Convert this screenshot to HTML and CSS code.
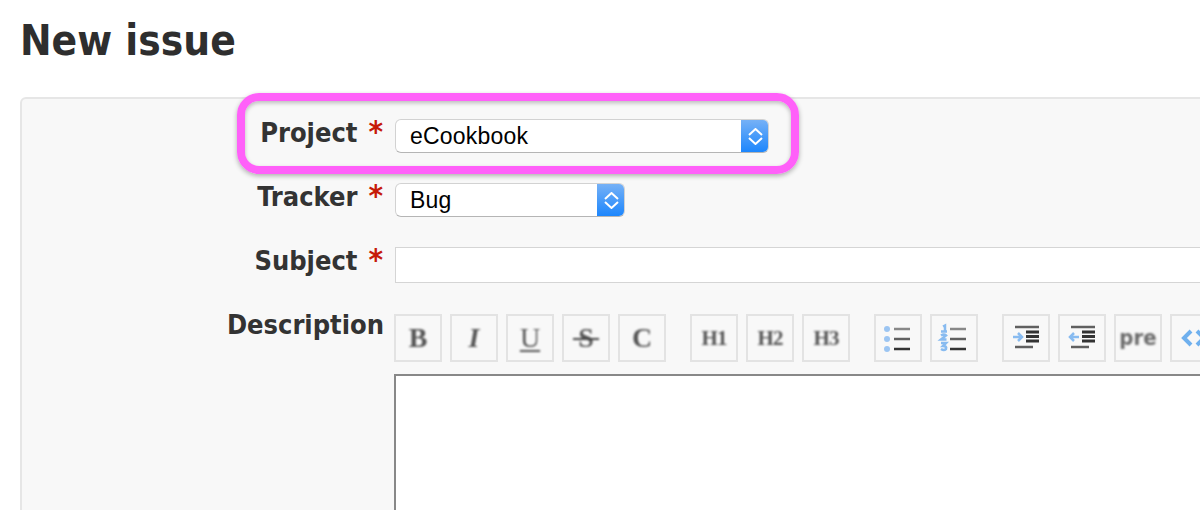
FILE: index.html
```html
<!DOCTYPE html>
<html lang="en">
  <head>
    <meta charset="UTF-8" />
    <title>New issue</title>
    <link rel="stylesheet" href="styles.css">
  </head>
  <body>
    <h2 class="page-title">New issue</h2>

    <form class="issue-form">
      <!-- Project -->
      <label class="field-label">Project<span class="required">*</span></label>
      <div class="select select-project">
        <span class="select-text">eCookbook</span>
        <span class="select-arrow">
          <svg width="15" height="17" viewBox="0 0 15 17"><path d="M1 7L7.500 1 14 7M1 10l6.500 6 6.500-6" /></svg>
        </span>
      </div>

      <!-- Tracker -->
      <label class="field-label">Tracker<span class="required">*</span></label>
      <div class="select select-tracker">
        <span class="select-text">Bug</span>
        <span class="select-arrow">
          <svg width="15" height="17" viewBox="0 0 15 17"><path d="M1 7L7.500 1 14 7M1 10l6.500 6 6.500-6" /></svg>
        </span>
      </div>

      <!-- Subject -->
      <label class="field-label">Subject<span class="required">*</span></label>
      <input class="subject" type="text" />

      <!-- Description -->
      <label class="field-label">Description</label>
      <div class="editor">
        <div class="toolbar">
          <div class="tool-group">
            <button class="tool" type="button"><span class="glyph">B</span></button>
            <button class="tool" type="button"><span class="glyph glyph-i">I</span></button>
            <button class="tool" type="button"><span class="glyph glyph-u">U</span></button>
            <button class="tool" type="button"><span class="glyph glyph-s">S</span></button>
            <button class="tool" type="button"><span class="glyph">C</span></button>
          </div>
          <div class="tool-group">
            <button class="tool" type="button"><span class="glyph glyph-h">H1</span></button>
            <button class="tool" type="button"><span class="glyph glyph-h">H2</span></button>
            <button class="tool" type="button"><span class="glyph glyph-h">H3</span></button>
          </div>
          <div class="tool-group">
            <button class="tool" type="button">
              <svg width="28" height="24" viewBox="0 0 28 24">
                <g class="ico-blue"><circle cx="3" cy="3" r="3" /><circle cx="3" cy="13" r="3" /><circle cx="3" cy="23" r="3" /></g>
                <path class="ico-line ico-line-light" d="M10 3h16" />
                <path class="ico-line ico-line-mid" d="M10 13h16" />
                <path class="ico-line" d="M10 23h16" />
              </svg>
            </button>
            <button class="tool" type="button">
              <svg width="28" height="26" viewBox="0 0 28 26">
                <path class="ico-blue-line" d="M3 1.500l2-1v6M1 6.500h6M1 10.500q3-2 5 0l-5 4h5.500M1 18h5l-3 3q4 0 3 3-2 2-5 0" />
                <path class="ico-line ico-line-light" d="M10 4h16" />
                <path class="ico-line ico-line-mid" d="M10 14h16" />
                <path class="ico-line" d="M10 24h16" />
              </svg>
            </button>
          </div>
          <div class="tool-group">
            <button class="tool" type="button">
              <svg width="28" height="24" viewBox="0 0 28 24">
                <path class="ico-line ico-line-mid" d="M3 1h24M3 21h18" />
                <path class="ico-line ico-line-thick" d="M14 6h13M14 10.500h13M14 15h13" />
                <path class="ico-blue-line" d="M1 11h9M6 7l4 4-4 4" />
              </svg>
            </button>
            <button class="tool" type="button">
              <svg width="28" height="24" viewBox="0 0 28 24">
                <path class="ico-line ico-line-mid" d="M3 1h24M3 21h18" />
                <path class="ico-line ico-line-thick" d="M14 6h13M14 10.500h13M14 15h13" />
                <path class="ico-blue-line" d="M11 11h-9M6 7l-4 4 4 4" />
              </svg>
            </button>
            <button class="tool" type="button"><span class="glyph glyph-pre">pre</span></button>
            <button class="tool" type="button">
              <svg width="28" height="20" viewBox="0 0 28 20">
                <path class="ico-code" d="M11 3l-7 7 7 7M17 3l7 7-7 7" />
              </svg>
            </button>
          </div>
        </div>
        <textarea class="description"></textarea>
      </div>
    </form>

    <!-- annotation drawn over the screenshot -->
    <div class="highlight"></div>
  </body>
</html>
```

FILE: styles.css
```css
html,
body {
  height: 510px;
  overflow: hidden;
}

body {
  margin: 0;
  padding: 0 0 0 20px;
  background-color: #fff;
  font-family: "DejaVu Sans", Verdana, sans-serif;
  font-stretch: condensed;
  color: #333;
  position: relative;
}

.page-title {
  margin: 0;
  padding-top: 18px;
  height: 97px;
  box-sizing: border-box;
  font-size: 42px;
  line-height: 46px;
  font-weight: bold;
  color: #2e2e2e;
}

.issue-form {
  display: grid;
  grid-template-columns: 362px 1fr;
  column-gap: 10px;
  width: 1300px;
  height: 500px;
  box-sizing: border-box;
  padding: 20px 0 0 0;
  grid-template-rows: 36px 36px 36px auto;
  row-gap: 28px;
  align-content: start;
  background-color: #f8f8f8;
  border: 2px solid #e6e6e6;
  border-radius: 6px;
}

.field-label {
  font-size: 27px;
  line-height: 28px;
  font-weight: bold;
  text-align: right;
  color: #333;
}

.required {
  margin-left: 11px;
  margin-right: 1px;
  font-size: 31px;
  line-height: 20px;
  color: #c61a09;
}

.select {
  display: flex;
  justify-content: space-between;
  height: 34px;
  margin-left: 1px;
  box-sizing: border-box;
  background: #fff;
  border: 1px solid #d2d2d2;
  border-bottom-color: #b5b5b5;
  border-radius: 6px;
  font-family: "Liberation Sans", Arial, sans-serif;
  font-size: 23px;
  letter-spacing: 0.2px;
  color: #000;
  overflow: hidden;
}

.select-project {
  width: 374px;
}

.select-tracker {
  width: 230px;
}

.select-text {
  padding-left: 14px;
  line-height: 33px;
}

.select-arrow {
  width: 28px;
  margin: -1px -1px -1px 0;
  display: flex;
  align-items: center;
  justify-content: center;
  background: linear-gradient(#78b2f6, #1a85fd);
}

.select-arrow svg path {
  fill: none;
  stroke: #fff;
  stroke-width: 2;
}

.subject {
  display: block;
  height: 36px;
  margin: 0 0 0 1px;
  padding: 0;
  box-sizing: border-box;
  background: #fff;
  border: 1px solid #d5d5d5;
}

.editor {
  display: flex;
  flex-direction: column;
  gap: 12px;
  margin-top: 3px;
}

.toolbar {
  display: flex;
  gap: 24px;
}

.tool-group {
  display: flex;
  gap: 8px;
}

.tool {
  display: flex;
  align-items: center;
  justify-content: center;
  width: 48px;
  height: 48px;
  padding: 0;
  box-sizing: border-box;
  background: #f8f8f8;
  border: 2px solid #e3e3e3;
}

.tool svg {
  overflow: visible;
  filter: blur(0.7px);
}

.glyph {
  position: relative;
  font-family: "Liberation Serif", "Times New Roman", serif;
  font-size: 28px;
  line-height: 30px;
  font-weight: bold;
  color: #555;
  filter: blur(0.8px);
}

.glyph-i {
  font-style: italic;
}

.glyph-u {
  font-weight: normal;
  text-decoration: underline 2px;
  text-underline-offset: 3px;
}

/* the strike runs wider than the letter */
.glyph-s::after {
  content: "";
  position: absolute;
  left: -5px;
  right: -5px;
  top: 15px;
  height: 2px;
  background: #444;
}

.glyph-h {
  font-size: 21px;
  letter-spacing: -1px;
}

.glyph-pre {
  font-family: "DejaVu Sans", Verdana, sans-serif;
  font-stretch: condensed;
  font-size: 22px;
  color: #6a6a6a;
}

.ico-blue {
  fill: #9cc5f2;
}

.ico-blue-line {
  fill: none;
  stroke: #88bbf0;
  stroke-width: 2.500;
}

.ico-line {
  fill: none;
  stroke: #333;
  stroke-width: 2.500;
}

.ico-line-light {
  stroke: #888;
}

.ico-line-mid {
  stroke: #606060;
}

.ico-line-thick {
  stroke-width: 3;
}

.ico-code {
  fill: none;
  stroke: #6fb0ee;
  stroke-width: 4;
}

.description {
  display: block;
  width: 100%;
  height: 300px;
  padding: 0;
  box-sizing: border-box;
  background: #fff;
  border: 2px solid #888;
  resize: none;
}

.highlight {
  position: absolute;
  left: 237px;
  top: 93px;
  width: 562px;
  height: 81px;
  box-sizing: border-box;
  border: 8px solid #ff60f9;
  border-radius: 22px;
  box-shadow: 0 2px 5px rgba(0, 0, 0, 0.3), inset 0 2px 4px rgba(0, 0, 0, 0.25);
}
```
